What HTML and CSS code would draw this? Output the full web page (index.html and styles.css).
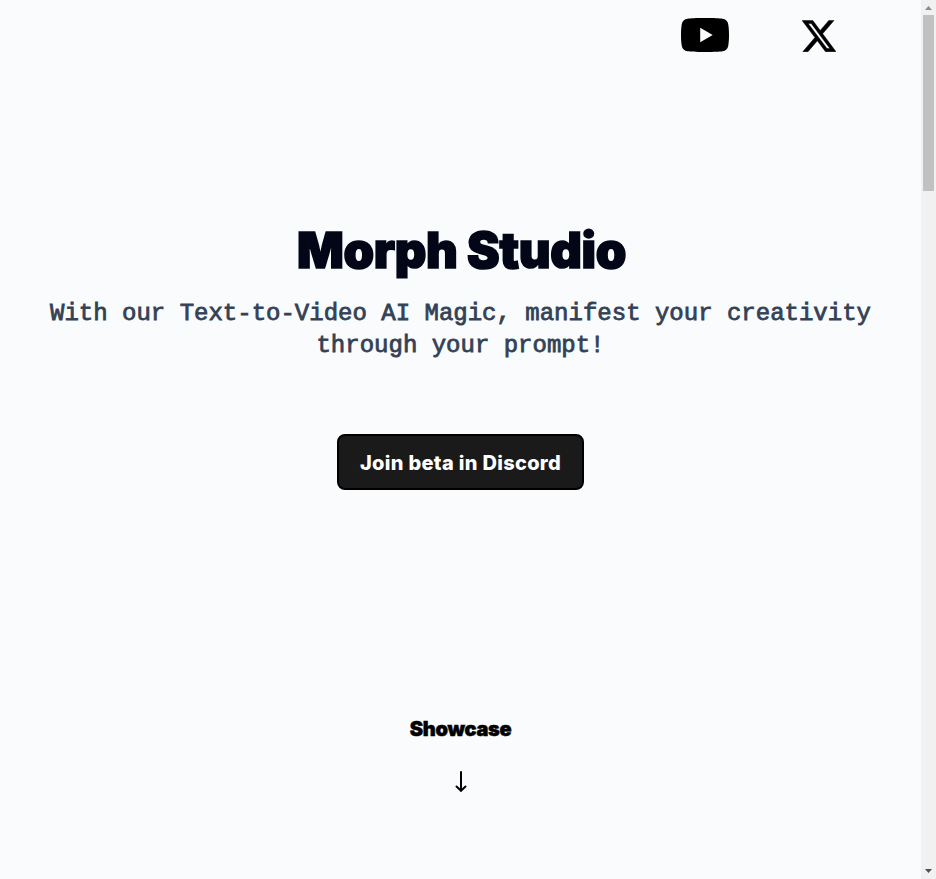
FILE: index.html
```html
<!DOCTYPE html>
<html lang="en">
<head>
<meta charset="utf-8">
<title>Morph Studio</title>
<link rel="stylesheet" href="styles.css">
</head>
<body>
<div class="page">
  <header class="social">
    <a class="youtube" aria-label="YouTube"><svg width="48" height="34" viewBox="0 0 48 34"><path fill-rule="evenodd" d="M24 0C34 0 38 .2 41.500 .7Q46.300 1.400 47.200 6C47.800 9.500 48 13 48 17S47.800 24.500 47.200 28Q46.300 32.600 41.500 33.300C38 33.800 34 34 24 34S10 33.800 6.500 33.300Q1.700 32.600 .8 28C.2 24.500 0 21 0 17S.2 9.500 .8 6Q1.700 1.400 6.500 .7C10 .2 14 0 24 0ZM19.200 9.800V24.200L31.700 17Z"/></svg></a>
    <a class="x" aria-label="X"><svg width="34" height="32" viewBox="0 0 24 22"><path stroke="#000" stroke-width=".3" d="M18.244 .25h3.308l-7.227 8.260 8.502 11.240H16.170l-5.214-6.817L4.990 19.750H1.680l7.730-8.835L1.254 .25H8.080l4.713 6.231zm-1.161 17.520h1.833L7.084 2.126H5.117z" transform="translate(-1.330 -.25) scale(1.110 1.130)"/></svg></a>
  </header>
  <main class="hero">
    <h1>Morph Studio</h1>
    <p>With our Text-to-Video AI Magic, manifest your creativity through your prompt!</p>
    <a class="join"><span>Join beta in Discord</span></a>
  </main>
  <section class="showcase">
    <h2>Showcase</h2>
    <svg width="13" height="22" viewBox="0 0 13 22"><path d="M7 1V20M2.500 15.500L7 19.800L11.500 15.500"/></svg>
  </section>
</div>
<div class="scrollbar">
  <svg width="15" height="15" viewBox="0 0 15 15"><path fill="#8b8b8b" d="M4 10L7.500 6L11 10Z"/></svg>
  <div class="thumb"></div>
  <svg class="down" width="15" height="15" viewBox="0 0 15 15"><path fill="#505050" d="M4 5H11L7.500 9Z"/></svg>
</div>
</body>
</html>
```
FILE: styles.css
```css
* { box-sizing: border-box; }
body { margin: 0; height: 879px; display: flex; overflow: hidden; background: #f9fbfd; font-family: Inter, sans-serif; }
svg { display: block; }
h1, h2, p { margin: 0; }
.page { flex: 1; display: flex; flex-direction: column; align-items: center; }
.social { width: 100%; height: 72px; padding: 18px 85px 0 0; display: flex; justify-content: flex-end; gap: 73px; }
.x { padding-top: 2px; }
.hero { width: 100%; margin-top: 149px; display: flex; flex-direction: column; align-items: center; }
h1 { height: 60px; padding-left: 2px; line-height: 60px; font-size: 49px; font-weight: 900; letter-spacing: -0.3px; color: #020617; -webkit-text-stroke: 1.6px #020617; white-space: nowrap; }
p { width: 832px; margin-top: 17px; text-align: center; font: 24px/32px "Liberation Mono", monospace; color: #334155; -webkit-text-stroke: 0.8px #334155; }
.join { width: 247px; height: 56px; margin-top: 72px; padding-top: 1px; border: 2px solid #000; border-radius: 8px; background: #1a1a1a; display: flex; align-items: center; justify-content: center; color: #fff; font-size: 20px; font-weight: 800; letter-spacing: 0.32px; white-space: nowrap; }
.showcase { margin-top: 225px; display: flex; flex-direction: column; align-items: center; }
h2 { height: 28px; line-height: 28px; font-size: 20px; font-weight: 900; letter-spacing: -0.3px; color: #000; -webkit-text-stroke: 0.5px #000; }
.showcase svg { margin-top: 28px; fill: none; stroke: #000; stroke-width: 2; stroke-linecap: round; stroke-linejoin: round; }
.scrollbar { width: 15px; background: #f1f1f1; display: flex; flex-direction: column; }
.thumb { height: 176px; margin: 0 2px; background: #c1c1c1; }
.down { margin-top: auto; }
```
